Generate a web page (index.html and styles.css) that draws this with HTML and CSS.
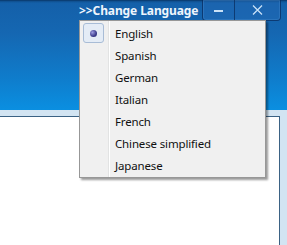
FILE: index.html
```html
<!DOCTYPE html>
<html lang="en">
<head>
<meta charset="UTF-8">
<meta name="viewport" content="width=device-width,initial-scale=1.0">
<title>Change Language</title>
<link rel="stylesheet" href="styles.css">
</head>
<body>

<!-- ───────── title bar ───────── -->
<header class="titlebar">
  <span class="title">&gt;&gt;Change Language</span>
  <div class="winBtns">
    <button class="winBtn min" title="Minimize"><span class="dash"></span></button>
    <button class="winBtn close" title="Close">
      <svg width="11" height="10" viewBox="0 0 11 10"><path d="M1 0.5 L10 9.5 M10 0.5 L1 9.5" stroke="#c9e2f7" stroke-width="1.3" fill="none"/></svg>
    </button>
  </div>
</header>

<!-- ───────── frame + client area ───────── -->
<div class="frameStrip"></div>
<main class="client"></main>

<!-- ───────── language menu ───────── -->
<ul class="langMenu">
  <li class="checked"><span class="ico"><i class="bullet"></i></span>English</li>
  <li><span class="ico"></span>Spanish</li>
  <li><span class="ico"></span>German</li>
  <li><span class="ico"></span>Italian</li>
  <li><span class="ico"></span>French</li>
  <li><span class="ico"></span>Chinese simplified</li>
  <li><span class="ico"></span>Japanese</li>
</ul>

</body>
</html>
```

FILE: styles.css
```css
:root{
  --frame:#d2e4f2; --line:#3b6284; --menuBg:#f0f0f0; --menuBorder:#979797;
}
*{box-sizing:border-box;margin:0;padding:0}
body{width:287px;height:245px;overflow:hidden;background:#fff;display:flex;flex-direction:column;font-family:"Noto Sans","Open Sans",sans-serif;position:relative}

/* ─ title bar ─ */
.titlebar{height:110px;flex:none;display:flex;align-items:flex-start;padding:0 6px 0 79px;
  background:linear-gradient(#0f4d8c 0,#1460a9 2px,#1567b2 30%,#0f7ccb 70%,#0a8fe1 100%);border-top:1px solid #0b3f75}
.title{color:#eef5fc;font-weight:700;font-size:12px;line-height:19px;white-space:nowrap;letter-spacing:-.1px}
.winBtns{margin-left:auto;display:flex;height:21px;margin-top:-1px;border:1px solid rgba(10,45,95,.75);border-top:none;border-radius:0 0 4px 4px;overflow:hidden;
  box-shadow:inset 0 0 0 1px rgba(120,180,235,.25)}
.winBtn{width:33px;height:100%;border:none;background:rgba(40,110,185,.35);display:flex;align-items:center;justify-content:center;cursor:pointer}
.winBtn.min{width:32px;border-right:1px solid rgba(10,45,95,.75)}
.winBtn.close{width:45px}
.dash{display:block;width:9px;height:2px;background:#c9e2f7;margin-top:2px}

/* ─ frame / client ─ */
.frameStrip{height:6px;flex:none;background:var(--frame)}
.client{flex:1;background:#fff;border-top:1px solid var(--line);border-right:1px solid var(--line);margin-right:7px;box-shadow:7px 0 0 var(--frame)}

/* ─ popup menu ─ */
.langMenu{position:absolute;left:79px;top:20px;width:187px;list-style:none;padding:1px;background:var(--menuBg);border:1px solid var(--menuBorder);
  box-shadow:2px 2px 2px rgba(0,0,0,.4);font-size:11.5px;letter-spacing:-.15px;color:#111}
.langMenu::before{content:"";position:absolute;left:28px;top:0;bottom:0;width:1px;background:#e2e3e3;box-shadow:1px 0 0 #fff}
.langMenu li{height:22px;display:flex;align-items:center;white-space:nowrap}
.ico{width:34px;height:22px;flex:none;padding:1px 0 1px 2px;display:flex}
.bullet{display:flex;width:21px;height:20px;border:1px solid #a8bcd6;border-radius:3px;background:#e4ecf6;align-items:center;justify-content:center}
.bullet::after{content:"";width:7px;height:7px;border-radius:50%;background:radial-gradient(circle at 35% 35%,#9c9ce0,#3c3c8c 60%,#24246a)}
```
